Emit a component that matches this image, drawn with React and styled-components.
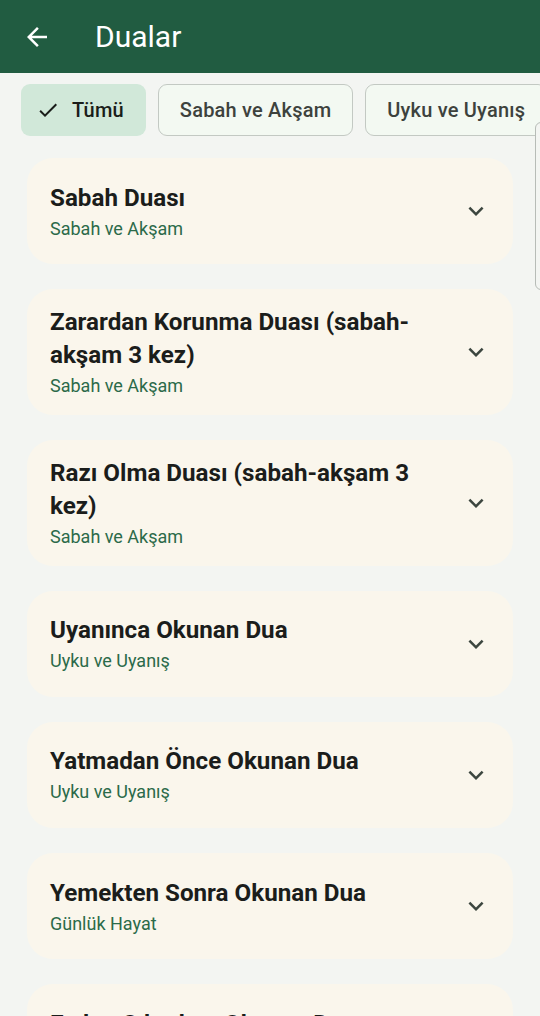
import React from 'react';
import styled, { createGlobalStyle } from 'styled-components';

const GlobalStyle = createGlobalStyle`
  html, body {
    margin: 0;
    padding: 0;
    background: #f3f5f2;
  }
  * {
    box-sizing: border-box;
  }
`;

const Page = styled.div`
  position: relative;
  width: 540px;
  height: 100vh;
  overflow: hidden;
  background: #f3f5f2;
  font-family: 'Roboto', 'Noto Sans', sans-serif;
`;

const TopBar = styled.header`
  display: flex;
  align-items: center;
  height: 73px;
  padding-left: 22px;
  background: #215c41;
  color: #ffffff;
`;

const BackButton = styled.button`
  display: flex;
  align-items: center;
  justify-content: center;
  width: 30px;
  height: 30px;
  padding: 0;
  border: none;
  background: transparent;
  color: #ffffff;
`;

const Title = styled.h1`
  margin: 0 0 0 43px;
  font-size: 30px;
  font-weight: 400;
  line-height: 40px;
`;

const ChipRow = styled.div`
  display: flex;
  gap: 12px;
  margin-top: 11px;
  padding-left: 21px;
  height: 52px;
  overflow: hidden;
`;

const Chip = styled.button`
  display: flex;
  align-items: center;
  flex-shrink: 0;
  gap: 12px;
  height: 52px;
  padding: ${(p) => (p.$selected ? '0 22px 0 15px' : '0 21px')};
  border-radius: 9px;
  border: ${(p) => (p.$selected ? 'none' : '1.5px solid #c3c9c3')};
  background: ${(p) => (p.$selected ? '#d1e8d9' : '#f3f9f2')};
  color: ${(p) => (p.$selected ? '#1a1d1a' : '#3d423d')};
  font-family: 'Roboto', sans-serif;
  font-size: 20px;
  font-weight: 500;
  letter-spacing: 0.2px;
  white-space: nowrap;
`;

const CardList = styled.div`
  display: flex;
  flex-direction: column;
  gap: 24.8px;
  margin-top: 22px;
  padding: 0 27px;
`;

const Card = styled.div`
  display: flex;
  align-items: center;
  min-height: 106.3px;
  padding: 17px 22px 17px 23px;
  border-radius: 26px;
  background: #faf6ec;
`;

const CardText = styled.div`
  flex: 1;
  display: flex;
  flex-direction: column;
  padding-right: 16px;
`;

const CardTitle = styled.div`
  font-size: 24.2px;
  font-weight: 700;
  line-height: 33px;
  color: #1b1d1b;
`;

const CardSub = styled.div`
  margin-top: 2px;
  font-size: 18px;
  line-height: 24px;
  color: #2b6a49;
`;

const Chevron = styled.svg`
  flex-shrink: 0;
  width: 30px;
  height: 30px;
  fill: #3c463f;
`;

const EdgeTab = styled.div`
  position: absolute;
  left: 535px;
  top: 122px;
  width: 20px;
  height: 168px;
  border: 1.5px solid #b7bcb7;
  border-radius: 6px;
  background: #f3f5f2;
`;

const chips = ['Sabah ve Akşam', 'Uyku ve Uyanış', 'Günlük Hayat'];

const duas = [
  { title: 'Sabah Duası', cat: 'Sabah ve Akşam' },
  { title: 'Zarardan Korunma Duası (sabah-akşam 3 kez)', cat: 'Sabah ve Akşam' },
  { title: 'Razı Olma Duası (sabah-akşam 3 kez)', cat: 'Sabah ve Akşam' },
  { title: 'Uyanınca Okunan Dua', cat: 'Uyku ve Uyanış' },
  { title: 'Yatmadan Önce Okunan Dua', cat: 'Uyku ve Uyanış' },
  { title: 'Yemekten Sonra Okunan Dua', cat: 'Günlük Hayat' },
  { title: 'Evden Çıkarken Okunan Dua', cat: 'Günlük Hayat' },
];

const App = () => {
  return (
    <Page>
      <GlobalStyle />
      <TopBar>
        <BackButton aria-label="Geri">
          <svg width="30" height="30" viewBox="0 0 24 24" fill="currentColor">
            <path d="M20 11H7.83l5.59-5.59L12 4l-8 8 8 8 1.41-1.41L7.83 13H20v-2z" />
          </svg>
        </BackButton>
        <Title>Dualar</Title>
      </TopBar>

      <ChipRow>
        <Chip $selected>
          <svg width="24" height="24" viewBox="0 0 24 24" fill="#1a1d1a">
            <path d="M9 16.17 4.83 12l-1.42 1.41L9 19 21 7l-1.41-1.41z" />
          </svg>
          Tümü
        </Chip>
        {chips.map((c) => (
          <Chip key={c}>{c}</Chip>
        ))}
      </ChipRow>

      <CardList>
        {duas.map((d) => (
          <Card key={d.title}>
            <CardText>
              <CardTitle>{d.title}</CardTitle>
              <CardSub>{d.cat}</CardSub>
            </CardText>
            <Chevron viewBox="0 0 24 24">
              <path d="M16.59 8.59 12 13.17 7.41 8.59 6 10l6 6 6-6z" />
            </Chevron>
          </Card>
        ))}
      </CardList>

      <EdgeTab />
    </Page>
  );
};

export default App;
